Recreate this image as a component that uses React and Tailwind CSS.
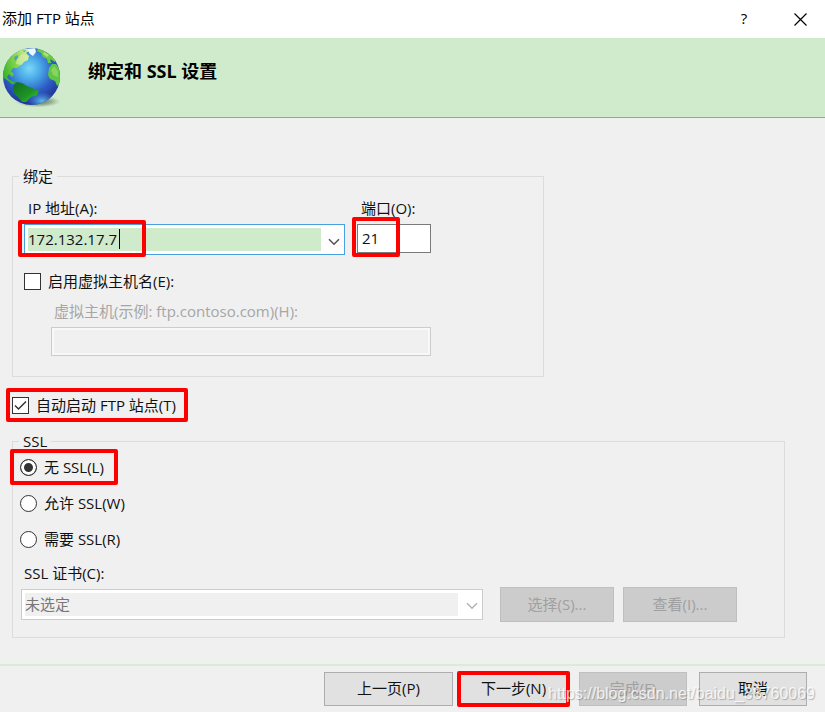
import React, { useState } from 'react';

const Highlight = ({ className }) => (
  <span aria-hidden="true" className={`pointer-events-none absolute rounded-xs border-4 border-[#ff0000] ${className}`} />
);

const Chevron = ({ className }) => (
  <svg viewBox="0 0 12 8" className={`h-2 w-3 ${className}`} fill="none" stroke="currentColor" strokeWidth="1.6">
    <path d="M1 1.2 6 6.2 11 1.2" />
  </svg>
);

const Globe = () => (
  <svg viewBox="0 0 64 68" className="h-[68px] w-16 shrink-0" aria-hidden="true">
    <defs>
      <radialGradient id="ocean" cx="0.46" cy="0.36" r="0.66">
        <stop offset="0" stopColor="#7ad8f8" />
        <stop offset="0.3" stopColor="#4aa9e6" />
        <stop offset="0.65" stopColor="#2c5cc4" />
        <stop offset="1" stopColor="#202d8c" />
      </radialGradient>
      <radialGradient id="glow" cx="0.5" cy="0.5" r="0.5">
        <stop offset="0" stopColor="#63c8f2" stopOpacity="0.9" />
        <stop offset="1" stopColor="#4a9fe4" stopOpacity="0" />
      </radialGradient>
      <radialGradient id="shade" cx="0.5" cy="0.5" r="0.5">
        <stop offset="0" stopColor="#3d5540" stopOpacity="0.85" />
        <stop offset="0.6" stopColor="#5d7560" stopOpacity="0.5" />
        <stop offset="1" stopColor="#8fa891" stopOpacity="0" />
      </radialGradient>
      <linearGradient id="north" x1="0" y1="0.6" x2="1" y2="0.2">
        <stop offset="0" stopColor="#35b52b" />
        <stop offset="0.55" stopColor="#8ed84c" />
        <stop offset="1" stopColor="#d8efa0" />
      </linearGradient>
      <linearGradient id="south" x1="0" y1="0" x2="1" y2="1">
        <stop offset="0" stopColor="#126b22" />
        <stop offset="0.6" stopColor="#1d9424" />
        <stop offset="1" stopColor="#4cc93c" />
      </linearGradient>
      <clipPath id="sphere">
        <circle cx="31.5" cy="33.5" r="28.5" />
      </clipPath>
    </defs>
    <ellipse cx="38" cy="58.5" rx="23" ry="6" fill="url(#shade)" />
    <circle cx="31.5" cy="33.5" r="28.5" fill="url(#ocean)" />
    <g clipPath="url(#sphere)">
      <ellipse cx="42" cy="58" rx="15" ry="9" fill="url(#glow)" />
      <path fill="url(#north)" d="M2 34 3 22 9 13 17 7 26 5 29 8 26 10 29 13 28 17 25 18 21 22 17 25 13 25 11 28 14 31 12 34 9 31 7 34 10 38 14 40 12 41 7 37Z" />
      <path fill="#dcecb4" d="M17 16 22 11 28 13 28 17 24 19 21 22 16 21Z" opacity="0.65" />
      <path fill="#3f96d8" d="M14 14 18 12 18 15 15 18ZM22 8 26 7 25 9Z" opacity="0.8" />
      <path fill="#eef8fb" d="M27 6 35 5 36 9 33 13 30 11Z" />
      <path fill="#6acb45" d="M38 6 45 7 51 11 56 17 55 19 50 16 51 20 48 20 47 16 43 14 41 10 37 8Z" />
      <path fill="#b2df78" d="M44 9 49 12 47 14 43 11Z" />
      <path fill="#5ec744" d="M49 25 52 21 56 21 61 28 61 39 57 43 55 38 50 36 48 32Z" />
      <path fill="#a9db77" d="M51 27 54 23 58 28 58 34 53 32Z" opacity="0.6" />
      <path fill="url(#south)" d="M13 43 17 39 22 40 27 43 32 45 39 48 37 52 31 54 26 59 22 59 18 54 13 49Z" />
      <path fill="#35b32f" d="M10 37 15 39 14 41 9 39Z" />
    </g>
  </svg>
);

const Checkbox = ({ id, label, checked, onChange }) => (
  <div className="flex h-5 items-center gap-[7px]">
    <span className="relative flex">
      <input
        id={id}
        type="checkbox"
        checked={checked}
        onChange={(e) => onChange(e.target.checked)}
        className="size-[17px] appearance-none border border-[#333] bg-white"
      />
      {checked && (
        <svg viewBox="0 0 17 17" className="pointer-events-none absolute inset-0" fill="none" stroke="#333" strokeWidth="1.5">
          <path d="M3 8.5 6.5 12 14 4.5" />
        </svg>
      )}
    </span>
    <label htmlFor={id}>{label}</label>
  </div>
);

const sslOptions = [
  { value: 'none', label: '无 SSL(L)' },
  { value: 'allow', label: '允许 SSL(W)' },
  { value: 'require', label: '需要 SSL(R)' }
];

const disabledButton = 'border border-[#bfbfbf] bg-[#cccccc] pb-0.5 text-[#a0a0a0]';
const enabledButton = 'border border-[#adadad] bg-[#e1e1e1] pb-0.5';

const App = () => {
  const [ip, setIp] = useState('172.132.17.7');
  const [port, setPort] = useState('21');
  const [virtualHost, setVirtualHost] = useState(false);
  const [autoStart, setAutoStart] = useState(true);
  const [ssl, setSsl] = useState('none');

  return (
    <div className="flex min-h-screen flex-col bg-[#f0f0f0] font-['Open_Sans','Noto_Sans_CJK_SC',sans-serif] text-[15px] leading-5 text-[#111]">
      <header className="flex h-[38px] items-center bg-white pl-0.5 text-black">
        <h1 className="grow pb-0.5">添加 FTP 站点</h1>
        <button type="button" aria-label="帮助" className="w-12 pb-0.5">?</button>
        <button type="button" aria-label="关闭" className="flex w-[57px] justify-center pl-2">
          <svg viewBox="0 0 13 13" className="size-[13px]" stroke="currentColor" strokeWidth="1.2">
            <path d="M.5.5 12.5 12.5M12.5.5.5 12.5" />
          </svg>
        </button>
      </header>

      <div className="flex h-20 items-start gap-6 border-b border-[#a0a0a0] bg-[#d0eacc] pt-[5px]">
        <Globe />
        <h2 className="pt-4 text-lg leading-6 font-bold text-black">绑定和 SSL 设置</h2>
      </div>

      <main className="grow px-3 pt-12">
        <fieldset className="w-[532px] max-w-full border border-[#dcdcdc] pb-5">
          <legend className="ml-1.5 px-1">绑定</legend>
          <div className="flex gap-3 pt-3 pl-[11px]">
            <div className="w-[321px]">
              <label htmlFor="ip" className="block pl-1">IP 地址(A):</label>
              <div className="relative mt-1.5 flex h-[31px] border border-[#4a9fe0] bg-white p-[3px]">
                <input
                  id="ip"
                  value={ip}
                  onChange={(e) => setIp(e.target.value)}
                  className="min-w-0 grow bg-[#d0eacc] pb-0.5 outline-none"
                />
                <span aria-hidden="true" className="absolute top-1 left-[94px] h-5 w-px bg-black" />
                <button type="button" aria-label="IP 地址列表" className="flex w-5 items-center justify-center pt-1 pl-1.5 text-[#555]">
                  <Chevron className="shrink-0" />
                </button>
                <Highlight className="-top-[5px] -left-[7px] h-[37px] w-32" />
              </div>
            </div>
            <div className="w-[74px]">
              <label htmlFor="port" className="block pl-1 whitespace-nowrap">端口(O):</label>
              <div className="relative mt-1.5">
                <input
                  id="port"
                  value={port}
                  onChange={(e) => setPort(e.target.value)}
                  className="block h-[29px] w-full border border-[#7a7a7a] bg-white px-1 pb-0.5 outline-none"
                />
                <Highlight className="-top-[7px] -left-[5px] h-10 w-12" />
              </div>
            </div>
          </div>

          <div className="mt-4 pl-[11px]">
            <Checkbox id="virtualHost" label="启用虚拟主机名(E):" checked={virtualHost} onChange={setVirtualHost} />
          </div>
          <div className="mt-[10px] pl-[38px]">
            <label htmlFor="hostName" className="block pl-[3px] text-[#a6a6a6]">虚拟主机(示例: ftp.contoso.com)(H):</label>
            <input
              id="hostName"
              disabled={!virtualHost}
              className="mt-1.5 block h-[29px] w-[380px] border border-[#cccccc] bg-[#f0f0f0] px-1 inset-ring-2 inset-ring-[#f8f8f8]"
            />
          </div>
        </fieldset>

        <div className="relative mt-[18px] w-fit">
          <Checkbox id="autoStart" label="自动启动 FTP 站点(T)" checked={autoStart} onChange={setAutoStart} />
          <Highlight className="-inset-y-[7px] -right-3 -left-[6px]" />
        </div>

        <fieldset className="mt-4 mr-7 border border-[#dcdcdc] pb-[15px]">
          <legend className="ml-1.5 px-1">SSL</legend>
          <div className="flex flex-col items-start gap-4 pt-1.5 pl-[7px]">
            {sslOptions.map((option) => (
              <div key={option.value} className="relative flex h-5 items-center gap-[7px]">
                <input
                  id={option.value}
                  type="radio"
                  name="ssl"
                  checked={ssl === option.value}
                  onChange={() => setSsl(option.value)}
                  className="size-[17px] appearance-none rounded-full border border-[#333] bg-white checked:bg-[#333] checked:inset-ring-3 checked:inset-ring-white"
                />
                <label htmlFor={option.value}>{option.label}</label>
                {option.value === 'none' && <Highlight className="-inset-y-2 -right-3.5 -left-[10px]" />}
              </div>
            ))}
          </div>

          <div className="mt-[14px] pl-2">
            <label htmlFor="certificate" className="block pl-[3px]">SSL 证书(C):</label>
            <div className="mt-1 flex items-center gap-[9px]">
              <div className="relative mr-2 flex h-[31px] w-[462px] border border-[#cccccc] bg-white p-[3px] pr-6">
                <select id="certificate" disabled className="grow appearance-none bg-[#f0f0f0] pb-0.5 text-[#777] opacity-100">
                  <option>未选定</option>
                </select>
                <Chevron className="pointer-events-none absolute top-3 right-1 text-[#b5b5b5]" />
              </div>
              <button type="button" disabled className={`h-[35px] w-[114px] ${disabledButton}`}>选择(S)...</button>
              <button type="button" disabled className={`h-[35px] w-[114px] ${disabledButton}`}>查看(I)...</button>
            </div>
          </div>
        </fieldset>
      </main>

      <footer className="relative mt-[26px] flex justify-end border-t-2 border-[#d9edd6] py-1.5 pr-[18px]">
        <button type="button" className={`h-[34px] w-[129px] ${enabledButton}`}>上一页(P)</button>
        <span className="relative ml-1.5 flex">
          <button type="button" className="h-[34px] w-[109px] border-2 border-[#2f7fd0] bg-[#e1e1e1] pb-0.5">下一步(N)</button>
          <Highlight className="-inset-x-0.5 -inset-y-px" />
        </span>
        <button type="button" disabled className={`ml-[11px] h-[34px] w-[108px] ${disabledButton}`}>完成(F)</button>
        <button type="button" className={`ml-3 h-[34px] w-[108px] ${enabledButton}`}>取消</button>
        <span className="pointer-events-none absolute right-2.5 bottom-1.5 font-['Liberation_Sans',sans-serif] text-base leading-6 text-white/80 text-shadow-[1px_1px_1px_#00000040]">
          https://blog.csdn.net/baidu_38760069
        </span>
      </footer>
    </div>
  );
};

export default App;
